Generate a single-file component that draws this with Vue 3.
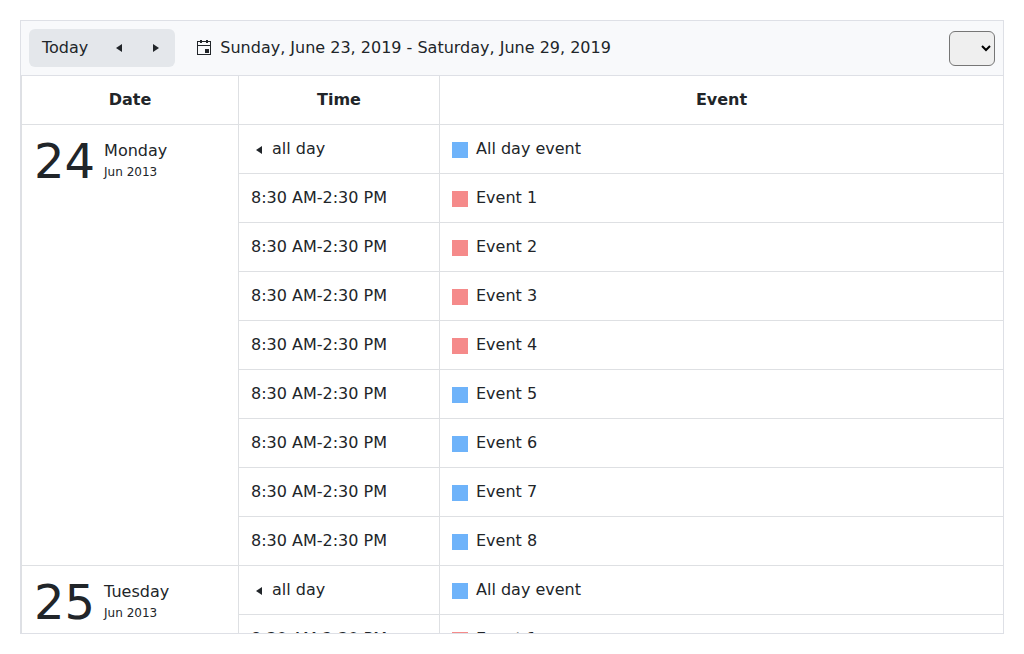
<script setup>
import { ref } from 'vue'

const view = ref('')

const events = [
  { title: 'All day event', time: 'all day', allDay: true, color: 'blue' },
  ...Array.from({ length: 8 }, (_, i) => ({
    title: `Event ${i + 1}`,
    time: '8:30 AM-2:30 PM',
    allDay: false,
    color: i < 4 ? 'red' : 'blue'
  }))
]

const days = [
  { day: 24, weekday: 'Monday', month: 'Jun 2013', events },
  { day: 25, weekday: 'Tuesday', month: 'Jun 2013', events: events.slice(0, 2) }
]
</script>

<template>
  <main class="page">
    <section class="scheduler">
      <header class="toolbar">
        <div class="group">
          <button type="button" class="btn">Today</button>
          <button type="button" class="btn arrow" aria-label="Previous">
            <svg class="icon" viewBox="0 0 16 16" aria-hidden="true"><path d="M11 4v8L5 8z" /></svg>
          </button>
          <button type="button" class="btn arrow" aria-label="Next">
            <svg class="icon" viewBox="0 0 16 16" aria-hidden="true"><path d="M5 4v8l6-4z" /></svg>
          </button>
        </div>
        <button type="button" class="range">
          <svg class="icon" viewBox="0 0 16 16" aria-hidden="true">
            <path fill-rule="evenodd" d="M4 0h2v1h4V0h2v1h3v14H1V1h3zM2 2v3h12V2h-2v1h-2V2H6v1H4V2zM2 6v8h12V6z" />
            <path d="M9 9h4v4H9z" />
          </svg>
          <span>Sunday, June 23, 2019 - Saturday, June 29, 2019</span>
        </button>
        <select v-model="view" class="views" aria-label="View"></select>
      </header>
      <div class="content">
        <table class="agenda">
          <thead>
            <tr>
              <th class="date-col" scope="col">Date</th>
              <th class="time-col" scope="col">Time</th>
              <th scope="col">Event</th>
            </tr>
          </thead>
          <tbody v-for="d in days" :key="d.day">
            <tr v-for="(e, i) in d.events" :key="e.title">
              <td v-if="i === 0" :rowspan="d.events.length" class="date-cell">
                <div class="date">
                  <strong class="day">{{ d.day }}</strong>
                  <div class="date-info">
                    <span class="weekday">{{ d.weekday }}</span>
                    <span class="month">{{ d.month }}</span>
                  </div>
                </div>
              </td>
              <td>
                <div class="line">
                  <svg v-if="e.allDay" class="icon lead" viewBox="0 0 16 16" aria-hidden="true"><path d="M11 4v8L5 8z" /></svg>
                  <span>{{ e.time }}</span>
                </div>
              </td>
              <td>
                <div class="line">
                  <span class="mark" :class="e.color"></span>
                  <span>{{ e.title }}</span>
                </div>
              </td>
            </tr>
          </tbody>
        </table>
      </div>
    </section>
  </main>
</template>

<style>
body {
  margin: 0;
  background: #fff;
}
</style>

<style scoped>
* {
  box-sizing: border-box;
}
.page {
  height: 100vh;
  padding: 20px;
  color: #212529;
  font: 16px/24px "DejaVu Sans", sans-serif;
}
.scheduler {
  display: flex;
  flex-direction: column;
  height: 100%;
  border: 1px solid #dee0e6;
}
.toolbar {
  display: flex;
  flex: none;
  align-items: center;
  padding: 8px;
  border-bottom: 1px solid #dee0e6;
  background: #f8f9fb;
}
.group {
  display: flex;
  border-radius: 6px;
  background: #e4e7eb;
}
.btn,
.range {
  display: flex;
  align-items: center;
  margin: 0;
  padding: 7px 13px;
  border: 0;
  background: none;
  color: inherit;
  font: inherit;
  white-space: nowrap;
}
.btn {
  height: 38px;
}
.btn.arrow {
  width: 37px;
  padding: 0 11px 0 10px;
}
.icon {
  display: block;
  flex: none;
  width: 16px;
  height: 16px;
  fill: currentColor;
}
.range {
  gap: 8px;
  margin-left: 8px;
}
.views {
  width: 46px;
  height: 35px;
  margin: 0 0 0 auto;
  padding: 4px;
  border: 1px solid #767676;
  border-radius: 6px;
  background-color: #efefef;
  color: #000;
  font: inherit;
}
.content {
  flex: 1;
  min-height: 0;
  overflow: hidden;
}
.agenda {
  width: 100%;
  table-layout: fixed;
  border-collapse: separate;
  border-spacing: 0;
}
.date-col {
  width: 217px;
}
.time-col {
  width: 201px;
}
th,
td {
  padding: 12px;
  border: solid #dee0e3;
  border-width: 0 0 1px 1px;
  text-align: left;
  vertical-align: top;
}
th {
  text-align: center;
  font-weight: 700;
}
.line {
  display: flex;
  align-items: center;
}
.lead {
  margin: 2px 5px 0 0;
}
.mark {
  width: 16px;
  height: 16px;
  margin: 2px 8px 0 0;
}
.mark.blue {
  background: #6eb3fa;
}
.mark.red {
  background: #f58a8a;
}
.date {
  display: flex;
  gap: 9px;
}
.day {
  font-size: 48px;
  font-weight: 400;
  line-height: 48px;
}
.date-info {
  display: flex;
  flex-direction: column;
  padding-top: 2px;
}
.month {
  font-size: 12px;
  line-height: 18px;
}
</style>
